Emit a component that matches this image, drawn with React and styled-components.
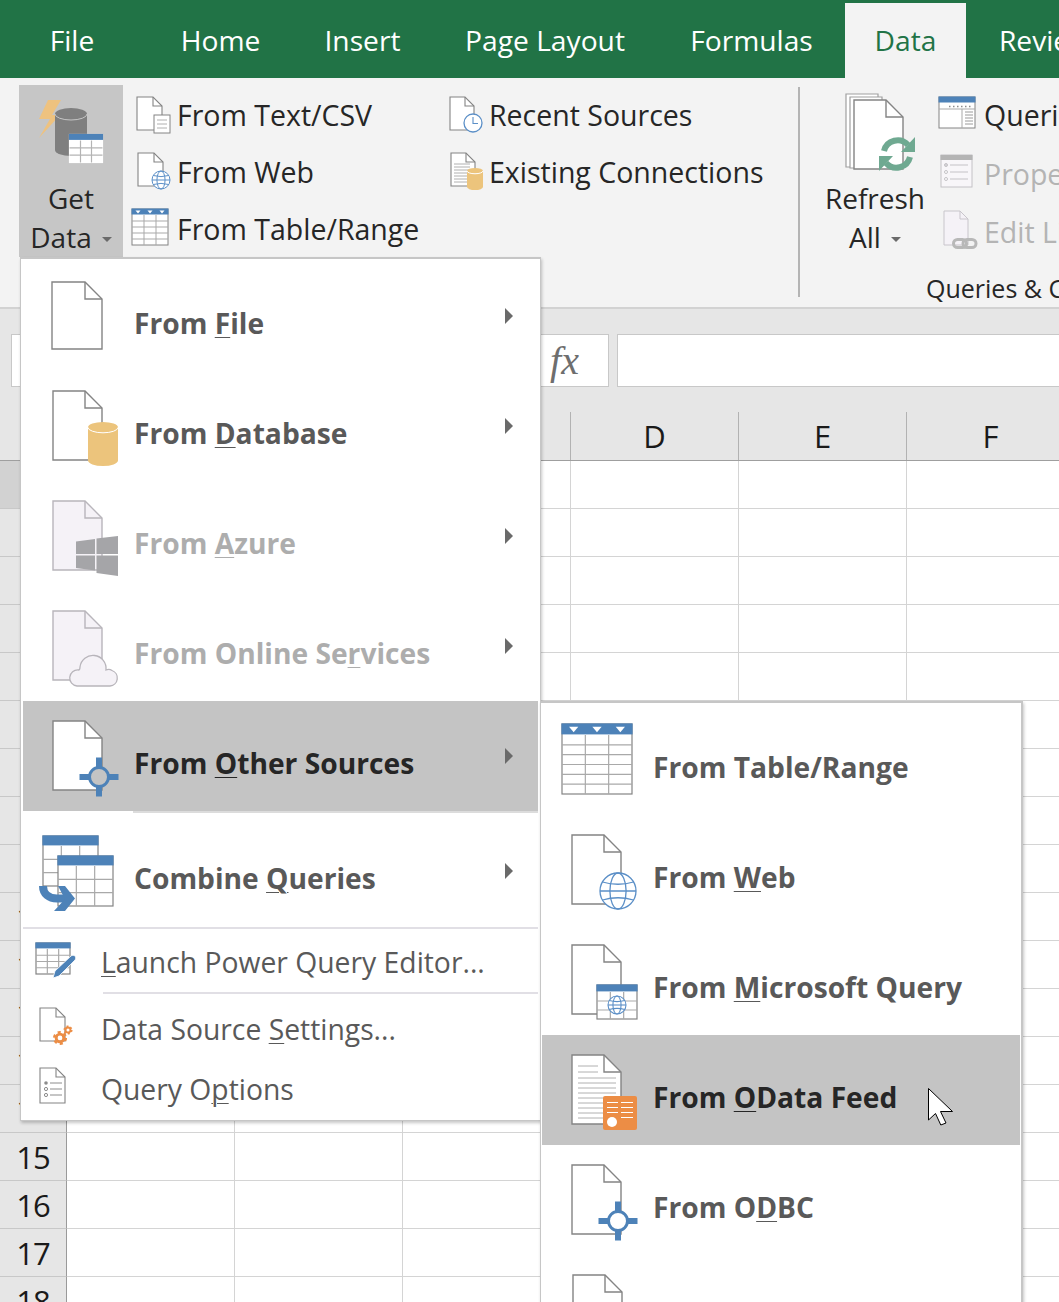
import React from 'react'
import styled, { createGlobalStyle } from 'styled-components'

const GlobalStyle = createGlobalStyle`
  html, body {
    margin: 0;
    padding: 0;
    overflow: hidden;
    background: #fff;
  }
  * { box-sizing: border-box; }
`

const BLUE = '#4d82b8'
const GLOBE = '#5b8fc7'
const SAND = '#ecc47c'
const ORANGE = '#ec8d45'
const DOC_LINE = '#848484'
const OFF_LINE = '#b8b5bb'
const OFF_FILL = '#f5f2f7'
const UI_FONT = '"Open Sans", "Noto Sans", sans-serif'

const Page = styled.div`
  width: 1059px;
  height: 1302px;
  position: relative;
  overflow: hidden;
  font-family: ${UI_FONT};
  background: #fff;
`
const TabBar = styled.div`
  height: 78px;
  background: #217346;
  display: flex;
  padding-left: 2px;
  white-space: nowrap;
`
const Tab = styled.div`
  flex: none;
  width: ${p => p.$w}px;
  margin-top: 3px;
  margin-right: ${p => p.$after || 0}px;
  padding-bottom: 2px;
  display: flex;
  align-items: center;
  justify-content: center;
  font-size: 28.2px;
  color: ${p => (p.$active ? '#217346' : '#fff')};
  background: ${p => (p.$active ? '#f3f3f3' : 'transparent')};
`
const Ribbon = styled.div`
  height: 231px;
  background: #f3f3f3;
  border-bottom: 2px solid #d2d2d2;
  display: flex;
  align-items: flex-start;
  padding: 7px 0 0 19px;
  overflow: hidden;
`
const BigButton = styled.div`
  flex: none;
  width: ${p => p.$w}px;
  height: 172px;
  padding-top: ${p => p.$top}px;
  margin-left: ${p => p.$left || 0}px;
  background: ${p => (p.$active ? '#c6c6c6' : 'transparent')};
  display: flex;
  flex-direction: column;
  align-items: center;
  font-size: 28px;
  line-height: 39px;
  color: #262626;
`
const BigIcon = styled.svg`
  flex: none;
  overflow: visible;
  margin-bottom: ${p => p.$gap}px;
`
const BigLabelLine = styled.div`
  display: flex;
  align-items: center;
  gap: 10px;
`
const DownCaret = styled.span`
  width: 0;
  height: 0;
  margin-top: 4px;
  border-left: 5px solid transparent;
  border-right: 5px solid transparent;
  border-top: 5px solid #6a6a6a;
`
const RibbonColumn = styled.div`
  flex: none;
  width: ${p => p.$w}px;
  margin-left: ${p => p.$left || 0}px;
  margin-top: ${p => p.$top || 2}px;
`
const RibbonItem = styled.div`
  height: ${p => p.$h || 57}px;
  display: flex;
  align-items: center;
  gap: ${p => p.$gap || 3}px;
  font-size: 28.5px;
  white-space: nowrap;
  color: ${p => (p.$off ? '#b4b4b4' : '#262626')};
`
const ItemText = styled.span`
  margin-top: ${p => p.$dy || 0}px;
`
const SmallIcon = styled.svg`
  flex: none;
  overflow: visible;
`
const Divider = styled.div`
  flex: none;
  width: 2px;
  height: 210px;
  margin-top: 2px;
  background: #b4b4b4;
`
const RibbonGroup = styled.div`
  flex: none;
  margin-left: 20px;
  display: flex;
  flex-direction: column;
`
const GroupRow = styled.div`
  display: flex;
  align-items: flex-start;
`
const GroupLabel = styled.div`
  margin: 8px 0 0 106px;
  font-size: 25px;
  line-height: 36px;
  white-space: nowrap;
  color: #262626;
`
const FormulaBar = styled.div`
  height: 103px;
  background: #e6e6e6;
  display: flex;
  align-items: flex-start;
  padding: 25px 0 0 11px;
`
const NameBox = styled.div`
  flex: none;
  width: 499px;
  height: 53px;
  background: #fff;
  border: 1px solid #c8c8c8;
`
const FxBox = styled.div`
  flex: none;
  width: 89px;
  height: 53px;
  margin-left: 10px;
  background: #fff;
  border: 1px solid #c8c8c8;
  display: flex;
  align-items: center;
  justify-content: center;
  font: italic 40px "Liberation Serif", serif;
  color: #6e6e6e;
`
const FormulaInput = styled.div`
  flex: 1;
  height: 53px;
  margin-left: 8px;
  background: #fff;
  border: 1px solid #c8c8c8;
  border-right: 0;
`
const HeaderRow = styled.div`
  display: flex;
  height: 49px;
  background: #e6e6e6;
  border-bottom: 1px solid #9f9f9f;
`
const HeaderCell = styled.div`
  flex: none;
  width: ${p => (p.$corner ? 67 : 168)}px;
  border-right: 1px solid #b2b2b2;
  display: flex;
  align-items: center;
  justify-content: center;
  font-size: 31px;
  color: #1a1a1a;
`
const GridRow = styled.div`
  display: flex;
  height: 48px;
`
const RowHeader = styled.div`
  flex: none;
  width: 67px;
  background: ${p => (p.$selected ? '#d2d2d2' : '#e6e6e6')};
  border-right: 1px solid #9a9a9a;
  border-bottom: 1px solid #c8c8c8;
  display: flex;
  align-items: center;
  justify-content: center;
  font-size: 31px;
  letter-spacing: -1px;
  color: #1a1a1a;
`
const Cell = styled.div`
  flex: none;
  width: 168px;
  border-right: 1px solid #d4d4d4;
  border-bottom: 1px solid #d4d4d4;
`
const Menu = styled.div`
  position: absolute;
  left: 20px;
  top: 257px;
  width: 521px;
  height: 864px;
  padding: 2px;
  background: #fff;
  border: 1px solid #c6c6c6;
  border-top-width: 2px;
  box-shadow: 1px 2px 3px rgba(0, 0, 0, 0.22);
`
const SubMenu = styled.div`
  position: absolute;
  left: 540px;
  top: 701px;
  width: 483px;
  height: 680px;
  padding: 2px 1px;
  background: #fff;
  border: 1px solid #c6c6c6;
  border-top-width: 2px;
  border-right-width: 2px;
  box-shadow: 1px 2px 3px rgba(0, 0, 0, 0.22);
`
const MenuRow = styled.div`
  position: relative;
  height: ${p => p.$h || 110}px;
  padding: ${p => p.$pad || 14}px 0 0 ${p => p.$sub ? 16 : 17}px;
  display: flex;
  align-items: center;
  gap: ${p => (p.$sub ? 7 : 6)}px;
  background: ${p => (p.$active ? '#c4c4c4' : 'transparent')};
  font-size: 28.2px;
  font-weight: 700;
  white-space: nowrap;
  color: ${p => (p.$active ? '#262626' : p.$off ? '#adadad' : '#595959')};
`
const MenuIcon = styled.svg`
  flex: none;
  overflow: visible;
  width: 88px;
  height: 96px;
`
const SideCaret = styled.span`
  align-self: flex-start;
  margin: ${p => p.$top || 33}px 25px 0 auto;
  width: 0;
  height: 0;
  border-top: 8px solid transparent;
  border-bottom: 8px solid transparent;
  border-left: 8px solid #6a6a6a;
`
const ActiveGap = styled.div`
  height: 2px;
  margin-left: 110px;
  background: #dcdcdc;
`
const MenuRule = styled.div`
  height: 2px;
  margin-left: ${p => p.$indent || 0}px;
  background: #e1dfe5;
`
const CommandRow = styled.div`
  height: ${p => p.$h}px;
  display: flex;
  align-items: center;
  padding-left: 7px;
  gap: 23px;
  font-size: 28.3px;
  white-space: nowrap;
  color: #595959;
`
const Key = styled.span`
  text-decoration: underline;
  text-decoration-thickness: 1px;
  text-underline-offset: 3px;
`
const PointerIcon = styled.svg`
  position: absolute;
  left: 386px;
  top: 53px;
  overflow: visible;
`

// text with the access key letter underlined, "From _File"
const Label = ({ text, dy }) => {
  const at = text.indexOf('_')
  if (at < 0) return <ItemText $dy={dy}>{text}</ItemText>
  return (
    <ItemText $dy={dy}>
      {text.slice(0, at)}
      <Key>{text[at + 1]}</Key>
      {text.slice(at + 2)}
    </ItemText>
  )
}

const Doc = ({ x = 13, y = 6, w = 49, h = 69, fold = 17, fill = '#fff', stroke = DOC_LINE, sw = 1.4 }) => (
  <g fill="none" stroke={stroke} strokeWidth={sw}>
    <path d={`M${x} ${y}H${x + w - fold}L${x + w} ${y + fold}V${y + h}H${x}Z`} fill={fill} />
    <path d={`M${x + w - fold} ${y}V${y + fold}H${x + w}`} />
  </g>
)

const TextLines = ({ x, x2, ys, stroke = '#b0b0b0' }) => (
  <g stroke={stroke} strokeWidth="1">
    {ys.map(y => <path key={y} d={`M${x} ${y}H${x2}`} />)}
  </g>
)

const Globe = ({ cx, cy, r, sw = 1.3, fill = '#fff' }) => (
  <g fill="none" stroke={GLOBE} strokeWidth={sw}>
    <circle cx={cx} cy={cy} r={r} fill={fill} />
    <ellipse cx={cx} cy={cy} rx={r * 0.45} ry={r} />
    <path d={`M${cx - r} ${cy}H${cx + r}`} />
    <path d={`M${cx - r * 0.86} ${cy - r * 0.5}Q${cx} ${cy - r * 0.25} ${cx + r * 0.86} ${cy - r * 0.5}`} />
    <path d={`M${cx - r * 0.86} ${cy + r * 0.5}Q${cx} ${cy + r * 0.25} ${cx + r * 0.86} ${cy + r * 0.5}`} />
  </g>
)

const Sheet = ({ x, y, w, h, head, cols = 3, rows = 4, line = '#a9a9a9', outer = DOC_LINE, color = BLUE, marks = false, sw = 1.2 }) => {
  const verticals = Array.from({ length: cols - 1 }, (_, i) => x + (w * (i + 1)) / cols)
  const horizontals = Array.from({ length: rows - 1 }, (_, i) => y + head + ((h - head) * (i + 1)) / rows)
  return (
    <g>
      <rect x={x} y={y} width={w} height={h} fill="#fff" stroke={outer} strokeWidth={sw} />
      <g stroke={line} strokeWidth={sw}>
        {verticals.map(v => <path key={v} d={`M${v} ${y + head}V${y + h}`} />)}
        {horizontals.map(l => <path key={l} d={`M${x} ${l}H${x + w}`} />)}
      </g>
      <rect x={x - sw / 2} y={y - sw / 2} width={w + sw} height={head} fill={color} />
      {marks && Array.from({ length: cols }, (_, i) => {
        const c = x + (w * (i + 0.5)) / cols
        const s = head * 0.42
        return <path key={i} d={`M${c - s} ${y + head * 0.25}H${c + s}L${c} ${y + head * 0.75}Z`} fill="#fff" />
      })}
    </g>
  )
}

const Barrel = ({ x, y, w, h, fill = SAND }) => {
  const ry = w * 0.18
  return (
    <g>
      <path d={`M${x} ${y + ry}A${w / 2} ${ry} 0 0 1 ${x + w} ${y + ry}V${y + h - ry}A${w / 2} ${ry} 0 0 1 ${x} ${y + h - ry}Z`} fill={fill} />
      <path d={`M${x} ${y + ry}A${w / 2} ${ry} 0 0 0 ${x + w} ${y + ry}`} fill="none" stroke="#fff" strokeWidth="1" />
    </g>
  )
}

const Target = ({ cx, cy, hole = '#fff', arm = 19.5 }) => (
  <g>
    <path d={`M${cx - arm} ${cy - 3}h39v6h-39zM${cx - 3} ${cy - arm}h6v39h-6z`} fill={BLUE} />
    <circle cx={cx} cy={cy} r="9.5" fill={hole} stroke={BLUE} strokeWidth="3" />
  </g>
)

const FileIcon = () => <MenuIcon><Doc x={12} y={7} w={50} h={67} /></MenuIcon>

const DatabaseIcon = () => (
  <MenuIcon>
    <Doc />
    <Barrel x={48} y={37} w={30} h={44} />
  </MenuIcon>
)

const AzureIcon = () => (
  <MenuIcon>
    <Doc fill={OFF_FILL} stroke={OFF_LINE} />
    <path d="M36 46.5l19-2.5v15H36zM56.5 43.5L78 41v18H56.5zM36 60.5h19v15l-19-2.5zM56.5 60.5H78V81l-21.5-3z" fill="#a5a5a8" />
  </MenuIcon>
)

const CloudIcon = () => (
  <MenuIcon>
    <Doc fill={OFF_FILL} stroke={OFF_LINE} />
    <path d="M37 81H70A8 8 0 0 0 72 65.5C70 64 68 64 66 65A13 13 0 0 0 40 62C40 64 40 65 38.5 65A8 8 0 0 0 37 81Z" fill={OFF_FILL} stroke={OFF_LINE} strokeWidth="1.3" />
  </MenuIcon>
)

const OtherIcon = () => (
  <MenuIcon>
    <Doc />
    <Target cx={59} cy={62} hole="#c4c4c4" />
  </MenuIcon>
)

const CombineIcon = () => (
  <MenuIcon>
    <Sheet x={3} y={6} w={55} h={50} head={10} rows={3} />
    <Sheet x={18} y={26} w={55} h={50} head={10} rows={3} />
    <path d="M3 56C3 64 9 68.5 17 68.5H28" fill="none" stroke={BLUE} strokeWidth="8" />
    <path d="M18 56H25L35 68.5L25 81H14L25 69Z" fill={BLUE} />
  </MenuIcon>
)

const TableMenuIcon = () => (
  <MenuIcon>
    <Sheet x={4} y={5} w={70} h={70} head={11} rows={6} marks />
  </MenuIcon>
)

const WebIcon = () => (
  <MenuIcon>
    <Doc x={14} />
    <Globe cx={60} cy={62} r={18} />
  </MenuIcon>
)

const QueryIcon = () => (
  <MenuIcon>
    <Doc x={14} />
    <Sheet x={39} y={46} w={40} h={34} head={7} rows={3} />
    <Globe cx={59} cy={66} r={9} sw={1.1} />
  </MenuIcon>
)

const ODataIcon = () => (
  <MenuIcon>
    <Doc x={14} fill="#fff" />
    <TextLines x={20} x2={40} ys={[17, 23]} />
    <TextLines x={20} x2={58} ys={[29, 34, 39, 44, 49, 54, 59, 64, 69]} />
    <rect x={45} y={47} width={34} height={34} rx={2} fill={ORANGE} />
    <g stroke="#fff" strokeWidth="1.2">
      <path d="M49 53.5h11M63 53.5h12M49 58.5h11M63 58.5h12M49 63.5h11M63 63.5h12M63 68.5h12" />
    </g>
    <circle cx={54} cy={73} r={5} fill="#fff" />
  </MenuIcon>
)

const OdbcIcon = () => (
  <MenuIcon>
    <Doc x={14} />
    <Target cx={60} cy={62} />
  </MenuIcon>
)

const BlankSubIcon = () => <MenuIcon><Doc x={15} /></MenuIcon>

const Small = ({ children }) => <SmallIcon width="48" height="48" viewBox="0 0 48 48">{children}</SmallIcon>

const EditorIcon = () => (
  <Small>
    <Sheet x={6} y={6} w={34} h={31} head={6} rows={4} />
    <path d="M23 41l2-7 16-15c1-1 3-1 4 0s1 3 0 4L29 39z" fill={BLUE} stroke="#fff" strokeWidth="0.8" />
  </Small>
)

const Gear = ({ cx, cy, r }) => (
  <g fill="none" stroke={ORANGE}>
    <circle cx={cx} cy={cy} r={r * 0.55} strokeWidth={r * 0.42} />
    <circle cx={cx} cy={cy} r={r * 0.85} strokeWidth={r * 0.32} strokeDasharray={`${r * 0.445} ${r * 0.445}`} />
  </g>
)

const SettingsIcon = () => (
  <Small>
    <Doc x={10} y={4} w={25} h={33} fold={9} sw={1.1} />
    <Gear cx={30} cy={34} r={7} />
    <Gear cx={38} cy={26} r={4.5} />
  </Small>
)

const OptionsIcon = () => (
  <Small>
    <Doc x={10} y={3} w={25} h={35} fold={9} sw={1.1} />
    <TextLines x={20} x2={32} ys={[18, 24, 30]} stroke="#8c8c8c" />
    <circle cx={16} cy={18} r={1.8} fill="#8c8c8c" />
    <circle cx={16} cy={24} r={1.6} fill="#fff" stroke="#8c8c8c" />
    <circle cx={16} cy={30} r={1.6} fill="#fff" stroke="#8c8c8c" />
  </Small>
)

const Tiny = ({ children }) => <SmallIcon width="40" height="40" viewBox="0 0 40 40">{children}</SmallIcon>

const TextCsvIcon = () => (
  <Tiny>
    <Doc x={3} y={1} w={25} h={33} fold={9} sw={1.1} />
    <rect x={20} y={19} width={16} height={18} fill="#fff" stroke={DOC_LINE} strokeWidth="1" />
    <TextLines x={23} x2={33} ys={[24, 28, 32]} />
  </Tiny>
)

const WebTinyIcon = () => (
  <Tiny>
    <Doc x={4} y={0} w={25} h={33} fold={9} sw={1.1} />
    <Globe cx={27} cy={27} r={9} sw={1} />
  </Tiny>
)

const TableTinyIcon = () => (
  <Tiny>
    <Sheet x={-2} y={-1} w={36} h={36} head={6} rows={5} marks sw={1} />
  </Tiny>
)

const RecentIcon = () => (
  <Tiny>
    <Doc x={4} y={1} w={24} h={33} fold={9} sw={1.1} />
    <circle cx={27} cy={27} r={9} fill="#fff" stroke={GLOBE} strokeWidth="1.3" />
    <path d="M27 21v6.5h5" fill="none" stroke={GLOBE} strokeWidth="1.1" />
  </Tiny>
)

const ExistingIcon = () => (
  <Tiny>
    <Doc x={5} y={0} w={24} h={33} fold={9} sw={1.1} />
    <TextLines x={8} x2={24} ys={[11, 14, 17, 20, 23, 26, 29]} />
    <Barrel x={21} y={15} w={16} h={22} />
  </Tiny>
)

const QueriesIcon = () => (
  <Tiny>
    <rect x={2} y={2} width={36} height={31} fill="#fff" stroke={DOC_LINE} strokeWidth="1" />
    <rect x={1.5} y={1.5} width={37} height={6} fill={BLUE} />
    <path d="M12 11.5h1.5M16 11.5h1.5M20 11.5h1.5M24 11.5h1.5M28 11.5h1.5M32 11.5h1.5" stroke="#8c8c8c" strokeWidth="1.4" />
    <path d="M2 14H38M25 14V33" stroke="#a9a9a9" strokeWidth="1" />
    <TextLines x={28} x2={36} ys={[17, 20, 23, 26, 29]} stroke="#9a9a9a" />
  </Tiny>
)

const PropertiesIcon = () => (
  <Tiny>
    <rect x={4} y={1} width={31} height={32} fill="#f8f6f9" stroke="#c4c2c6" strokeWidth="1" />
    <rect x={3.5} y={1} width={32} height={5} fill="#b4b4b4" />
    <TextLines x={13} x2={31} ys={[11, 18, 25]} stroke="#c4c2c6" />
    <circle cx={9} cy={11} r={1.5} fill="#d6d4d8" stroke="#c4c2c6" />
    <circle cx={9} cy={18} r={1.5} fill="#fff" stroke="#c4c2c6" />
    <circle cx={9} cy={25} r={1.5} fill="#fff" stroke="#c4c2c6" />
  </Tiny>
)

const EditLinksIcon = () => (
  <Tiny>
    <Doc x={7} y={-1} w={24} h={34} fold={8} sw={1} fill={OFF_FILL} stroke="#c8c5cb" />
    <g fill="none" stroke="#b8b8b8" strokeWidth="3">
      <rect x={16.5} y={27.5} width={13} height={8} rx={4} />
      <rect x={26} y={27.5} width={13} height={8} rx={4} />
    </g>
  </Tiny>
)

const GetDataIcon = () => (
  <BigIcon width="104" height="80" viewBox="0 0 104 80" $gap={4}>
    <path d="M42 5H29L20 24H31L20 43L41 20H33Z" fill="#eec27f" />
    <path d="M36 19A16 6 0 0 1 68 19V55A16 6 0 0 1 36 55Z" fill="#7f7f7f" />
    <path d="M36 19A16 6 0 0 0 68 19" fill="none" stroke="#c6c6c6" strokeWidth="1" />
    <Sheet x={50.5} y={39.5} w={33} h={28} head={6} rows={3} outer="#fff" line="#b4b4b4" />
  </BigIcon>
)

const RefreshIcon = () => (
  <BigIcon width="110" height="80" viewBox="0 0 110 80" $gap={9}>
    <path d="M26 4H58V77H26Z" fill="#fff" stroke="#a0a0a0" strokeWidth="1.2" />
    <path d="M30 7H62V78H30Z" fill="#fff" stroke="#a0a0a0" strokeWidth="1.2" />
    <Doc x={34} y={10} w={49} h={69} />
    <g fill="none" stroke="#6fa991" strokeWidth="6">
      <path d="M64 61A14 14 0 0 1 88 55" />
      <path d="M90 67A14 14 0 0 1 66 73" />
    </g>
    <path d="M95 47V62H81ZM59 81V66H73Z" fill="#6fa991" />
  </BigIcon>
)

const GRID_ROWS = Array.from({ length: 18 }, (_, i) => i + 1)
const COLUMNS = ['A', 'B', 'C', 'D', 'E', 'F']

// widths keep each label centred where the ribbon has it
const TABS = [
  { name: 'File', w: 140, after: 6 },
  { name: 'Home', w: 145 },
  { name: 'Insert', w: 139 },
  { name: 'Page Layout', w: 226 },
  { name: 'Formulas', w: 187 },
  { name: 'Data', w: 121, active: true },
  { name: 'Review', w: 158 },
]

const MAIN_ITEMS = [
  { label: 'From _File', Icon: FileIcon },
  { label: 'From _Database', Icon: DatabaseIcon },
  { label: 'From _Azure', Icon: AzureIcon, off: true },
  { label: 'From Online Se_rvices', Icon: CloudIcon, off: true },
  { label: 'From _Other Sources', Icon: OtherIcon, active: true },
]

const SUB_ITEMS = [
  { label: 'From Table/Range', Icon: TableMenuIcon },
  { label: 'From _Web', Icon: WebIcon },
  { label: 'From _Microsoft Query', Icon: QueryIcon },
  { label: 'From _OData Feed', Icon: ODataIcon, active: true },
  { label: 'From O_DBC', Icon: OdbcIcon },
]

export default function App() {
  return (
    <Page>
      <GlobalStyle />
      <TabBar>
        {TABS.map(t => <Tab key={t.name} $w={t.w} $after={t.after} $active={t.active}>{t.name}</Tab>)}
      </TabBar>

      <Ribbon>
        <BigButton $w={104} $top={10} $active>
          <GetDataIcon />
          <div>Get</div>
          <BigLabelLine>Data <DownCaret /></BigLabelLine>
        </BigButton>

        <RibbonColumn $w={312} $left={11}>
          <RibbonItem><TextCsvIcon /><ItemText $dy={-2}>From Text/CSV</ItemText></RibbonItem>
          <RibbonItem><WebTinyIcon /><ItemText $dy={-2}>From Web</ItemText></RibbonItem>
          <RibbonItem><TableTinyIcon /><ItemText $dy={-2}>From Table/Range</ItemText></RibbonItem>
        </RibbonColumn>
        <RibbonColumn $w={352}>
          <RibbonItem><RecentIcon /><ItemText $dy={-2}>Recent Sources</ItemText></RibbonItem>
          <RibbonItem><ExistingIcon /><ItemText $dy={-2}>Existing Connections</ItemText></RibbonItem>
        </RibbonColumn>
        <Divider />

        <RibbonGroup>
          <GroupRow>
            <BigButton $w={110} $top={5}>
              <RefreshIcon />
              <div>Refresh</div>
              <BigLabelLine>All <DownCaret /></BigLabelLine>
            </BigButton>
            <RibbonColumn $w={200} $left={7} $top={1}>
              <RibbonItem $h={58.5} $gap={7}><QueriesIcon />Queries &amp; Connections</RibbonItem>
              <RibbonItem $h={58.5} $gap={7} $off><PropertiesIcon />Properties</RibbonItem>
              <RibbonItem $h={58.5} $gap={7} $off><EditLinksIcon />Edit Links</RibbonItem>
            </RibbonColumn>
          </GroupRow>
          <GroupLabel>Queries &amp; Connections</GroupLabel>
        </RibbonGroup>
      </Ribbon>

      <FormulaBar>
        <NameBox />
        <FxBox>fx</FxBox>
        <FormulaInput />
      </FormulaBar>

      <HeaderRow>
        <HeaderCell $corner />
        {COLUMNS.map(c => <HeaderCell key={c}>{c}</HeaderCell>)}
      </HeaderRow>
      {GRID_ROWS.map(n => (
        <GridRow key={n}>
          <RowHeader $selected={n === 1}>{n}</RowHeader>
          {COLUMNS.map(c => <Cell key={c} />)}
        </GridRow>
      ))}

      <Menu>
        {MAIN_ITEMS.map(({ label, Icon, off, active }) => (
          <MenuRow key={label} $off={off} $active={active}>
            <Icon />
            <Label text={label} />
            <SideCaret />
          </MenuRow>
        ))}
        <ActiveGap />
        <MenuRow $h={114} $pad={16}>
          <CombineIcon />
          <Label text="Combine _Queries" />
          <SideCaret $top={34} />
        </MenuRow>
        <MenuRule />
        <CommandRow $h={63}><EditorIcon /><Label text="_Launch Power Query Editor..." dy={2} /></CommandRow>
        <MenuRule $indent={80} />
        <CommandRow $h={68}><SettingsIcon /><Label text="Data Source _Settings..." dy={1} /></CommandRow>
        <CommandRow $h={54}><OptionsIcon /><Label text="Query O_ptions" dy={0} /></CommandRow>
      </Menu>

      <SubMenu>
        {SUB_ITEMS.map(({ label, Icon, active }) => (
          <MenuRow key={label} $sub $active={active}>
            <Icon />
            <Label text={label} />
            {active && (
              <PointerIcon width="26" height="38" viewBox="0 0 26 38">
                <path d="M0.5 0.5V32L7.5 25.5L12.8 37L18 35L12.5 23.5H24.5Z" fill="#fff" stroke="#000" strokeWidth="1" />
              </PointerIcon>
            )}
          </MenuRow>
        ))}
        <MenuRow $sub><BlankSubIcon /></MenuRow>
      </SubMenu>
    </Page>
  )
}
